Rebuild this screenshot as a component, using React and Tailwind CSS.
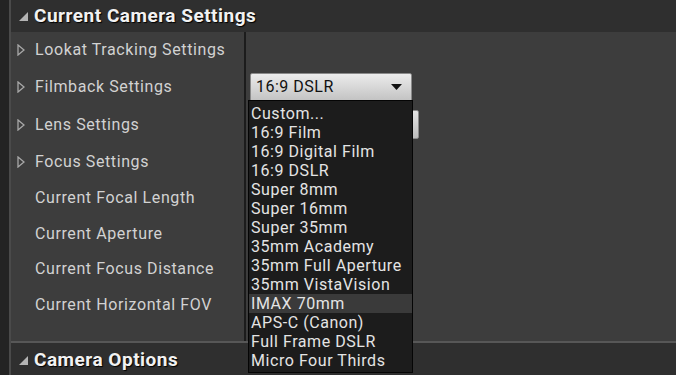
import React from 'react';

const font = { fontFamily: 'Roboto, "Noto Sans", sans-serif' };

const rows = [
  { label: 'Lookat Tracking Settings', group: true, h: 'h-[36px]' },
  { label: 'Filmback Settings', group: true, h: 'h-[38px]', combo: true },
  { label: 'Lens Settings', group: true, h: 'h-[37px]', stub: true },
  { label: 'Focus Settings', group: true, h: 'h-[37px]' },
  { label: 'Current Focal Length', h: 'h-[36px]' },
  { label: 'Current Aperture', h: 'h-[35px]' },
  { label: 'Current Focus Distance', h: 'h-[36px]' },
  { label: 'Current Horizontal FOV', h: 'h-[35px]' },
];

const options = [
  'Custom...',
  '16:9 Film',
  '16:9 Digital Film',
  '16:9 DSLR',
  'Super 8mm',
  'Super 16mm',
  'Super 35mm',
  '35mm Academy',
  '35mm Full Aperture',
  '35mm VistaVision',
  'IMAX 70mm',
  'APS-C (Canon)',
  'Full Frame DSLR',
  'Micro Four Thirds',
];

const CornerArrow = () => (
  <svg width="9" height="9" viewBox="0 0 9 9" className="shrink-0">
    <polygon points="9,0 9,9 0,9" fill="#b4b4b4" />
  </svg>
);

const OpenArrow = () => (
  <svg width="8" height="12" viewBox="0 0 8 12" className="shrink-0">
    <polygon points="1,1 7,6 1,11" fill="none" stroke="#a8a8a8" strokeWidth="1.3" />
  </svg>
);

const SectionHeader = ({ title, className }) => (
  <div className={`flex items-center gap-[6px] pl-[8px] bg-[#2f2f2f] ${className}`}>
    <CornerArrow />
    <span className="text-[19px] font-bold text-[#f2f2f2] tracking-[0.5px] [text-shadow:1px_1px_1px_#000]">
      {title}
    </span>
  </div>
);

export default function App() {
  return (
    <div className="w-[676px] h-[375px] flex bg-[#232323] overflow-hidden" style={font}>
      <div className="w-[9px] shrink-0 bg-[#232323]" />
      <div className="flex-1 flex flex-col border-l-2 border-[#4a4a4a]">
        <SectionHeader title="Current Camera Settings" className="h-[32px]" />

        <div className="relative flex-1 flex bg-[#3d3d3d]">
          <div className="w-[233px] shrink-0 flex flex-col">
            {rows.map((r) => (
              <div key={r.label} className={`${r.h} flex items-center pl-[6px]`}>
                <div className="w-[18px] flex items-center">{r.group && <OpenArrow />}</div>
                <span className="text-[16px] text-[#d2d2d2] tracking-[0.6px]">{r.label}</span>
              </div>
            ))}
          </div>
          <div className="w-[2px] bg-[#1c1c1c]" />
          <div className="flex-1 flex flex-col">
            <div className="h-[36px]" />
            <div className="h-[38px] flex items-center pl-[4px]">
              <div className="w-[162px] h-[29px] flex items-center justify-between pl-[5px] pr-[9px] rounded-[2px] border border-[#8a8a8a] bg-gradient-to-b from-[#ececec] to-[#c2c2c2]">
                <span className="text-[16px] text-[#111] tracking-[0.5px]">16:9 DSLR</span>
                <svg width="11" height="6" viewBox="0 0 11 6">
                  <polygon points="0,0 11,0 5.5,6" fill="#111" />
                </svg>
              </div>
            </div>
            <div className="h-[37px] flex items-center pl-[4px]">
              <div className="w-[169px] h-[29px] rounded-[2px] border border-[#8a8a8a] bg-gradient-to-b from-[#e4e4e4] to-[#bcbcbc]" />
            </div>
          </div>

          <div className="absolute left-[237px] top-[68px] w-[165px] border border-[#050505] bg-[#1c1c1c] pt-[3px] pb-[2px]">
            {options.map((o) => (
              <div
                key={o}
                className={`h-[19px] flex items-center pl-[2px] text-[16px] leading-none tracking-[0.55px] text-[#e4e4e4] ${
                  o === 'IMAX 70mm' ? 'bg-[#3a3a3a]' : ''
                }`}
              >
                {o}
              </div>
            ))}
          </div>
        </div>

        <div className="h-[2px] bg-[#575757]" />
        <SectionHeader title="Camera Options" className="h-[32px] pt-[2px]" />
      </div>
    </div>
  );
}
